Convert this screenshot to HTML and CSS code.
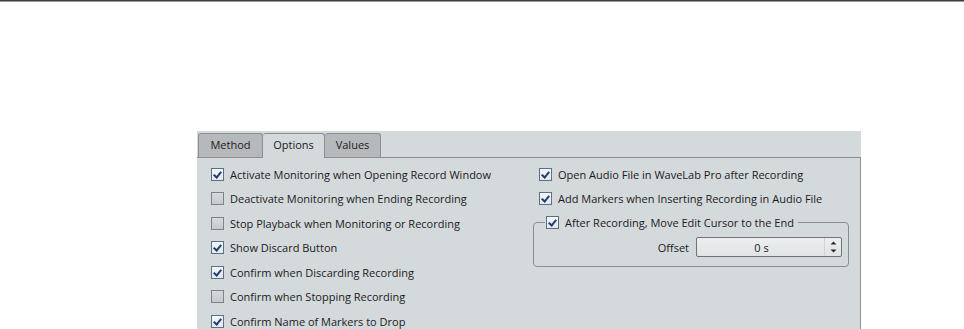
FILE: index.html
```html
<!DOCTYPE html>
<html>
<head>
<meta charset="utf-8">
<link rel="stylesheet" href="styles.css">
</head>
<body>
<div class="topline"></div>
<div class="dialog">
  <div class="tabbar">
    <div class="tab tab-method">Method</div>
    <div class="tab tab-options active">Options</div>
    <div class="tab tab-values">Values</div>
  </div>
  <div class="content">
    <div class="col col-left">
      <label class="row"><span class="cb on"></span><span class="lbl">Activate Monitoring when Opening Record Window</span></label>
      <label class="row"><span class="cb"></span><span class="lbl">Deactivate Monitoring when Ending Recording</span></label>
      <label class="row"><span class="cb"></span><span class="lbl">Stop Playback when Monitoring or Recording</span></label>
      <label class="row"><span class="cb on"></span><span class="lbl">Show Discard Button</span></label>
      <label class="row"><span class="cb on"></span><span class="lbl">Confirm when Discarding Recording</span></label>
      <label class="row"><span class="cb"></span><span class="lbl">Confirm when Stopping Recording</span></label>
      <label class="row"><span class="cb on"></span><span class="lbl">Confirm Name of Markers to Drop</span></label>
    </div>
    <div class="col col-right">
      <label class="row indent"><span class="cb on"></span><span class="lbl">Open Audio File in WaveLab Pro after Recording</span></label>
      <label class="row indent"><span class="cb on"></span><span class="lbl">Add Markers when Inserting Recording in Audio File</span></label>
      <fieldset class="group">
        <legend class="legend"><span class="cb on"></span><span class="lbl">After Recording, Move Edit Cursor to the End</span></legend>
        <div class="offset-row">
          <span class="offset-lbl">Offset</span>
          <div class="spin">
            <span class="spin-val">0 s</span>
            <span class="spin-btns">
              <svg width="7" height="4" viewBox="0 0 7 4"><path d="M0.5 3.5 L3.5 0.5 L6.5 3.5 Z" fill="#2a2a2a"/></svg>
              <svg width="7" height="4" viewBox="0 0 7 4"><path d="M0.5 0.5 L3.5 3.5 L6.5 0.5 Z" fill="#2a2a2a"/></svg>
            </span>
          </div>
        </div>
      </fieldset>
    </div>
  </div>
</div>
</body>
</html>
```
FILE: styles.css
```css
html, body {
  margin: 0;
  padding: 0;
  background: #ffffff;
  height: 329px;
  overflow: hidden;
}
body {
  font-family: "Open Sans", "Noto Sans", sans-serif;
  font-size: 11px;
  color: #1b1b1b;
}
.topline {
  height: 1px;
  background: #3d3d3d;
  border-bottom: 1px solid #9a9a9a;
}
.dialog {
  margin: 129px 0 0 197px;
  width: 664px;
  height: 198px;
  background: #d4d9dc;
  overflow: hidden;
}
.tabbar {
  height: 26px;
  display: flex;
  align-items: flex-end;
  padding-left: 1px;
  box-sizing: border-box;
}
.tab {
  height: 24px;
  box-sizing: border-box;
  border: 1px solid #8d9092;
  border-bottom: none;
  border-radius: 3px 3px 0 0;
  background: #b6b9bb;
  display: flex;
  align-items: center;
  justify-content: center;
  color: #1b1b1b;
  font-size: 11px;
  padding-bottom: 3px;
}
.tab-method { width: 65px; }
.tab-options { width: 62px; background: #d4d9dc; height: 25px; margin-bottom: -1px; position: relative; border-left: none; padding-bottom: 4px; }
.tab-values { width: 56px; border-left: none; }
.content {
  border-top: 1px solid #8d9092;
  border-right: 1px solid #8d9092;
  display: flex;
  padding: 4px 0 0 14px;
  height: 200px;
}
.col-left {
  width: 322px;
}
.col-right {
  width: 316px;
}
.row {
  display: flex;
  align-items: center;
  height: 24.5px;
  white-space: nowrap;
}
.row.indent {
  padding-left: 6px;
}
.cb {
  width: 13px;
  height: 13px;
  box-sizing: border-box;
  border: 1px solid #7d8388;
  background: linear-gradient(#d8dbdd, #c6cacd);
  flex: none;
  margin-right: 6px;
  position: relative;
}
.cb.on {
  border-color: #5b6f86;
  background: linear-gradient(#f4f6f8, #e4e8ec);
}
.cb.on::after {
  content: "";
  position: absolute;
  left: 3px;
  top: 1px;
  width: 3px;
  height: 6px;
  border-right: 2px solid #1f3f72;
  border-bottom: 2px solid #1f3f72;
  transform: rotate(40deg);
}
.group {
  margin: 4px 0 0 0;
  padding: 0 6px 9px 0;
  border: 1px solid #8a8f93;
  border-radius: 4px;
  width: 316px;
  box-sizing: border-box;
}
.legend {
  display: flex;
  align-items: center;
  margin-left: 11px;
  padding: 0 4px 0 1px;
  height: 14px;
  white-space: nowrap;
}
.offset-row {
  display: flex;
  justify-content: flex-end;
  align-items: center;
  margin-top: 8px;
}
.offset-lbl {
  margin-right: 7px;
}
.spin {
  width: 146px;
  height: 20px;
  box-sizing: border-box;
  border: 1px solid #6f7376;
  border-radius: 2px;
  background: linear-gradient(#eceeef, #e1e4e6);
  display: flex;
  align-items: center;
}
.spin-val {
  flex: 1;
  text-align: center;
  padding-left: 2px;
}
.spin-btns {
  width: 16px;
  height: 18px;
  border-left: 1px solid #cfd3d6;
  display: flex;
  flex-direction: column;
  align-items: center;
  justify-content: center;
  gap: 4px;
}
.spin-btns svg { display: block; }
```
